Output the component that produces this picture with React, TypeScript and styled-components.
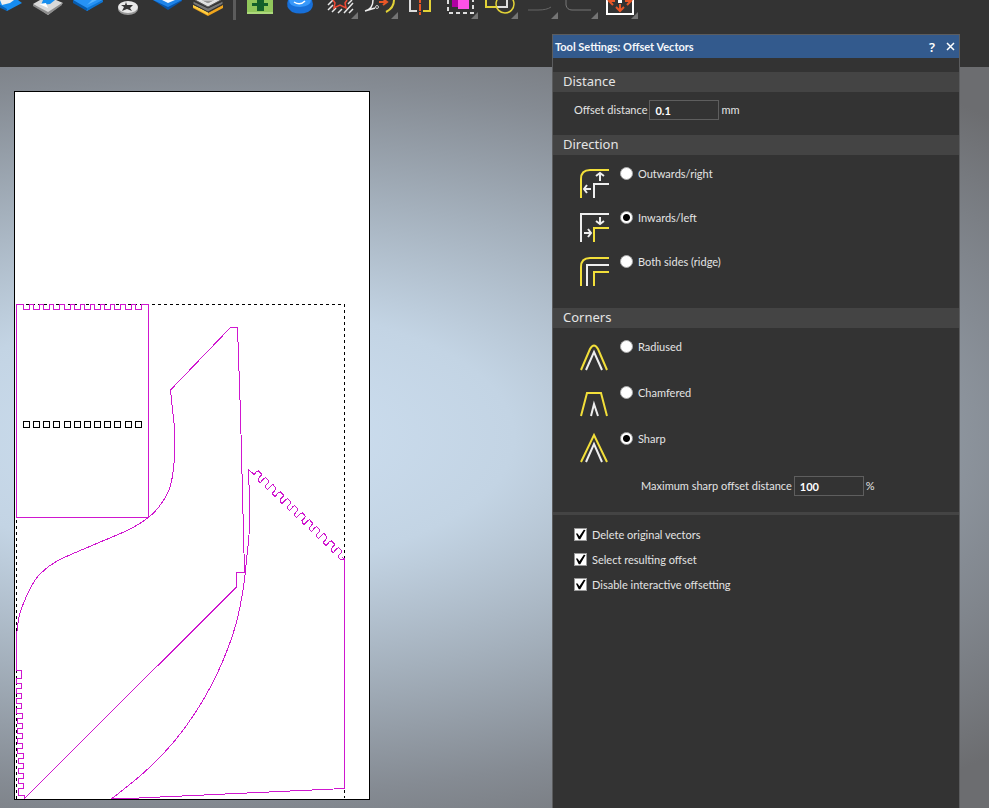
import React, { useState } from "react";
import styled, { createGlobalStyle } from "styled-components";

const Global = createGlobalStyle`
  *, *::before { box-sizing: border-box; }
  body {
    margin: 0;
    background: #333;
    color: #e4e4e4;
    font: 11px/16px Lato, "Noto Sans", sans-serif;
  }
`;

const Shell = styled.div`
  position: relative;
  display: flex;
  flex-direction: column;
  min-height: 100vh;
  overflow: hidden;
`;

const Toolbar = styled.header`
  display: flex;
  align-items: flex-start;
  height: 67px;
  margin-left: -12px;
  background: #333;
`;

const ToolButton = styled.button`
  flex: none;
  width: 40px;
  height: 24px;
  padding: 0;
  border: 0;
  background: none;
`;

const ToolSeparator = styled.div`
  flex: none;
  width: 3px;
  height: 20px;
  margin: 0 4px 0 5px;
  background: #5c5c5c;
`;

const ToolArt = styled.svg`
  display: block;
  width: 40px;
  height: 24px;
`;

const Workspace = styled.main`
  flex: 1;
  padding: 24px 14px 8px;
  background: radial-gradient(ellipse 1050px 470px at 220px 370px, #cfe1f3 0%, #c3d4e4 28%, #a4b0bc 52%, #858b93 76%, #6c6d70 100%);
`;

const Sheet = styled.svg`
  display: block;
  width: 356px;
  height: 709px;
  background: #fff;
  shape-rendering: crispEdges;
`;

const Panel = styled.section`
  position: absolute;
  top: 34px;
  right: 29px;
  bottom: 0;
  width: 408px;
  border: 1px solid #5b5c5e;
  border-bottom: 0;
  background: #333;
`;

const TitleBar = styled.div`
  display: flex;
  align-items: center;
  height: 23px;
  padding-left: 2px;
  background: #335a8d;
  color: #f4f6fa;
`;

const Title = styled.h1`
  flex: 1;
  margin: 0;
  font-size: 11px;
  font-weight: 700;
`;

const TitleButton = styled.button`
  display: grid;
  place-items: center;
  width: 18px;
  height: 20px;
  padding: 0;
  border: 0;
  background: none;
  color: #fff;
  font: 600 13px/16px "Noto Sans", sans-serif;
`;

const Group = styled.section<{ $gap?: number }>`
  padding-top: ${(p) => p.$gap ?? 15}px;
`;

const Heading = styled.h2`
  height: 20px;
  margin: 0;
  padding-left: 10px;
  background: #444;
  font: 400 13px/18px "Noto Sans", sans-serif;
`;

const Field = styled.label<{ $indent: number; $top?: number }>`
  display: flex;
  align-items: center;
  gap: 2px;
  height: 20px;
  margin-top: ${(p) => p.$top ?? 8}px;
  padding-left: ${(p) => p.$indent}px;
`;

const NumberBox = styled.input`
  width: 70px;
  height: 20px;
  padding: 0 5px;
  border: 1px solid #5e5e5e;
  background: #333;
  color: #fff;
  font: 700 11px/16px Lato, "Noto Sans", sans-serif;
  outline: 0;
`;

const Options = styled.div<{ $gap: number }>`
  display: grid;
  grid-auto-rows: 32px;
  row-gap: ${(p) => p.$gap}px;
  padding: 12px 0 0 26px;
`;

const Option = styled.label`
  display: flex;
  align-items: flex-start;
`;

const OptionArt = styled.svg`
  width: 32px;
  height: 32px;
  margin-right: 9px;
  fill: none;
  stroke-width: 2;
`;

const Radio = styled.input`
  appearance: none;
  width: 13px;
  height: 13px;
  margin: 0 5px 0 0;
  border: 1px solid #aaa;
  border-radius: 50%;
  background: #fff;
  &:checked {
    background: radial-gradient(circle, #000 0 3px, #fff 4px);
  }
`;

const OptionText = styled.span`
  line-height: 14px;
`;

const Divider = styled.hr`
  height: 3px;
  margin: 16px 0 0;
  border: 0;
  background: #444;
`;

const Checks = styled.div`
  display: grid;
  grid-auto-rows: 25px;
  align-items: center;
  padding: 7px 0 0 21px;
`;

const Check = styled.label`
  display: flex;
  align-items: center;
  gap: 5px;
`;

const CheckBox = styled.input`
  appearance: none;
  width: 13px;
  height: 13px;
  margin: 0;
  border: 1px solid #9a9a9a;
  background: #fff;
  &:checked::before {
    content: "";
    display: block;
    width: 11px;
    height: 11px;
    background: #000;
    clip-path: polygon(8% 42%, 24% 42%, 40% 66%, 80% 6%, 96% 8%, 48% 94%, 34% 94%);
  }
`;

type Point = [number, number];

// Smooth curve through a run of points.
const spline = (pts: Point[]) =>
  pts
    .slice(1)
    .map((p, i) => {
      const a = pts[Math.max(0, i - 1)];
      const b = pts[i];
      const d = pts[Math.min(pts.length - 1, i + 2)];
      return `C${b[0] + (p[0] - a[0]) / 6} ${b[1] + (p[1] - a[1]) / 6} ${p[0] - (d[0] - b[0]) / 6} ${p[1] - (d[1] - b[1]) / 6} ${p[0]} ${p[1]}`;
    })
    .join("");

const twelve = Array.from({ length: 12 }, (_, i) => i);
const slotX = (i: number) => Math.round(23 + i * 10.15) + 0.5;

const combTop = `M16.5 304.5${twelve.map((i) => `H${slotX(i)}v5h6v-5`).join("")}H148.5V517.5H16.5Z`;

const combLeft = twelve
  .map((i) => {
    const left = 16.5 + Math.floor(i / 4);
    const y = 683.5 + i * 10;
    return `H${left + 5}V${i === 0 ? 678.5 : y - 5}H${left}V${i === 11 ? 795.5 : y}`;
  })
  .join("");

const combSlope = twelve
  .map((i) => {
    const x = 254 + i * 7.3;
    const y = 474.5 + i * 7;
    return `L${x} ${y}l3 -3.4l1.6 -.2l2.6 2.8v1.6l-3 3.4v1.8l2 2`;
  })
  .join("");

const outline: Point[] = [
  [16.5, 636], [19, 617], [24, 602], [31, 587], [40, 574], [57, 561], [92, 545.5], [128, 530],
  [149, 517], [161, 504], [170, 487], [174, 463], [174.5, 430], [172, 405], [170.5, 390],
];

const arc: Point[] = [
  [249.5, 500], [249, 535], [247, 555], [243.5, 587], [236, 624], [222, 663], [205, 697], [184, 729],
  [163, 754], [140, 776], [112, 798.5],
];

function Drawing() {
  return (
    <Sheet viewBox="14 91 356 709" fill="none" role="img" aria-label="Vector drawing">
      <rect x="14.5" y="91.5" width="355" height="708" stroke="#000" />
      <path d="M16.5 799V304.5H344.5V798" stroke="#000" strokeDasharray="3 3" />
      {twelve.map((i) => (
        <rect key={i} x={slotX(i)} y="421.5" width="6" height="6" stroke="#000" />
      ))}
      <g stroke="#cf17cf">
        <path d={combTop} />
        <path d={`M16.5 636${spline(outline)}L230.5 327.5H237.5L240.5 414L244.5 572.5H236.5V587L24.5 798.5`} />
        <path d={`M16.5 636V670.5${combLeft}H24.5V799`} />
        <path d={`M249.5 500${spline(arc)}L128 798.5L344.5 788.5V559L342 557`} />
        <path d={`M249.5 500L248.5 469.5${combSlope}L344.5 560`} />
      </g>
    </Sheet>
  );
}

const Corner = () => <path d="M38 12V19H31Z" fill="#747474" />;

const tools: { name: string; art: React.ReactNode }[] = [
  {
    name: "Import relief",
    art: (
      <>
        <path d="M4 0L19 11L34 3L30 0Z" fill="#168cf0" />
        <path d="M4 0L19 9V11L0 2Z" fill="#0862b8" />
        <path d="M12 0L14 5L22 3L26 0Z" fill="#eee" />
      </>
    ),
  },
  {
    name: "Export relief",
    art: (
      <>
        <path d="M5 4L12 0H28L35 3L20 15Z" fill="#d9d9d9" />
        <path d="M5 4L20 12L34 3V5L20 15L5 6Z" fill="#8d8d8d" />
        <path d="M15 0L13 5L22 4L27 0Z" fill="#188eee" />
        <path d="M11 4L20 8L18 3Z" fill="#fff" />
      </>
    ),
  },
  {
    name: "Relief surface",
    art: (
      <>
        <path d="M5 0L19 11L35 0Z" fill="#2692f5" />
        <path d="M5 0L19 8V11L5 3Z" fill="#075caf" />
        <path d="M19 8L35 0V2L19 11Z" fill="#0c74d3" />
        <path d="M19 5L29 0H24Z" fill="#56b4ff" />
      </>
    ),
  },
  {
    name: "Relief clipart",
    art: (
      <>
        <ellipse cx="20" cy="9" rx="10" ry="6" fill="#999" />
        <ellipse cx="20" cy="7" rx="10" ry="6" fill="#e8e8e8" />
        <path d="M18 2L19 5H25L22 8L24 11L19 9L14 11L16 7L13 5H17Z" fill="#343434" />
      </>
    ),
  },
  {
    name: "Relief block",
    art: (
      <>
        <path d="M5 0L20 10L34 1V0Z" fill="#0754aa" />
        <path d="M5 0L20 7L34 0Z" fill="#1e83e8" />
        <path d="M14 0L20 3L27 0Z" fill="#f2f7ff" />
      </>
    ),
  },
  {
    name: "Relief layers",
    art: (
      <>
        <path d="M5 5L20 13L35 5V8L20 16L5 8Z" fill="#f0a51c" />
        <path d="M5 5L20 12V15L5 7Z" fill="#ffcf42" />
        <path d="M5 1L20 8L35 1V4L20 12L5 4Z" fill="#777" stroke="#333" />
        <path d="M7 0L20 7L33 0" fill="#ddd" stroke="#555" />
        <path d="M12 0L20 4L28 0Z" fill="#999" stroke="#eee" />
      </>
    ),
  },
];

const vectorTools: { name: string; art: React.ReactNode }[] = [
  {
    name: "Add",
    art: (
      <>
        <path d="M7 0H33V12Q33 14 31 14H9Q7 14 7 12Z" fill="#91c75b" />
        <path d="M7 12H33V14H7Z" fill="#acd97c" />
        <path d="M17 0H24V3H28V6H24V11H17V6H12V3H17Z" fill="#14602a" />
      </>
    ),
  },
  {
    name: "Smooth",
    art: (
      <>
        <path d="M8 0H32Q35 8 28 12Q20 15 12 12Q5 7 8 0Z" fill="#176fd8" />
        <path d="M9 0H31Q31 6 20 7Q9 7 9 0Z" fill="#3798fa" />
        <path d="M14 2Q20 6 25 1" fill="none" stroke="#fff" strokeWidth="1.5" />
      </>
    ),
  },
  {
    name: "Clip vectors",
    art: (
      <>
        <path d="M8 5L13 0M8 10L13 5M12 12L16 8M18 13L22 9M24 13L33 3M29 13L33 9M28 4L32 0" stroke="#e7e7e7" strokeWidth="1.5" />
        <path d="M13 0L15 3L14 8L20 5L26 8L25 3L27 0" fill="#333" stroke="#ed4a35" strokeWidth="1.5" />
        <Corner />
      </>
    ),
  },
  {
    name: "Fit curves",
    art: (
      <>
        <path d="M5 11Q13 9 13 0M5 11L15 8" fill="none" stroke="#eee" strokeWidth="1.5" />
        <circle cx="17" cy="7" r="1.500" fill="#333" stroke="#ccc" />
        <path d="M19 2H26M23 -1L27 2L23 5" fill="none" stroke="#e95727" strokeWidth="2" />
        <path d="M34 0Q34 8 26 12" fill="none" stroke="#e2d237" strokeWidth="2" />
        <Corner />
      </>
    ),
  },
  {
    name: "Mirror",
    art: (
      <>
        <path d="M10 0V11H17" fill="none" stroke="#ddd" strokeWidth="2" />
        <path d="M30 0V11H23" fill="none" stroke="#e2d237" strokeWidth="2" />
        <path d="M20 0V16" stroke="#e95727" strokeWidth="2" strokeDasharray="3 1 7 1" />
      </>
    ),
  },
  {
    name: "Group",
    art: (
      <>
        <path d="M8 0V13H33V0" fill="none" stroke="#ddd" strokeWidth="2" strokeDasharray="4 3" />
        <path d="M12 0H18V7H12Z" fill="#b000a2" />
        <path d="M18 0H29V9H18Z" fill="#ff51e7" />
        <Corner />
      </>
    ),
  },
  {
    name: "Weld",
    art: (
      <>
        <path d="M6 0V7H17" fill="none" stroke="#e2d237" strokeWidth="2" />
        <path d="M17 7H27V0" fill="none" stroke="#ddd" strokeWidth="2" />
        <circle cx="25" cy="4" r="9" fill="none" stroke="#e2d237" strokeWidth="1.5" />
        <Corner />
      </>
    ),
  },
  {
    name: "Join",
    art: (
      <>
        <path d="M8 10H18Q27 10 31 7" fill="none" stroke="#666" />
        <Corner />
      </>
    ),
  },
  {
    name: "Fillet",
    art: (
      <>
        <path d="M6 0V5Q7 10 12 10H31" fill="none" stroke="#777" />
        <Corner />
      </>
    ),
  },
  {
    name: "Transform",
    art: (
      <>
        <path d="M7 0V14H33V0" fill="none" stroke="#fff" strokeWidth="2" />
        <path d="M18 0H22V3H18Z" fill="#fff" />
        <path d="M20 4V10M16 7L20 11L24 7M9 1H15M12 0L9 1L13 5M31 1H25M28 0L31 1L27 5" fill="none" stroke="#e95727" strokeWidth="2" />
        <Corner />
      </>
    ),
  },
];

const yellow = "#f2df3a";
const white = "#eee";

const directions = [
  {
    label: "Outwards/right",
    art: (
      <>
        <path d="M2 31V12Q2 3 11 3H30" stroke={yellow} />
        <path d="M15 31V17H30M12 22H5M8 18L5 22L8 26M21 14V6M17 9L21 6L25 9" stroke={white} />
      </>
    ),
  },
  {
    label: "Inwards/left",
    art: (
      <>
        <path d="M2 31V3H30M5 22H12M9 18L12 22L9 26M21 6V13M17 10L21 13L25 10" stroke={white} />
        <path d="M15 31V17H30" stroke={yellow} />
      </>
    ),
  },
  {
    label: "Both sides (ridge)",
    art: (
      <>
        <path d="M2 31V12Q2 3 11 3H30M15 31V17H30" stroke={yellow} />
        <path d="M8 31V10H30" stroke={white} />
      </>
    ),
  },
];

const corners = [
  {
    label: "Radiused",
    art: (
      <>
        <path d="M2 30L11 9Q15 2 19 9L28 30" stroke={yellow} />
        <path d="M7 30L15 12L23 30" stroke={white} />
      </>
    ),
  },
  {
    label: "Chamfered",
    art: (
      <>
        <path d="M2 30L8 7H22L28 30" stroke={yellow} />
        <path d="M12 30L15 18L19 30" stroke={white} />
      </>
    ),
  },
  {
    label: "Sharp",
    art: (
      <>
        <path d="M2 30L15 3L28 30" stroke={yellow} />
        <path d="M7 30L15 12L23 30" stroke={white} />
      </>
    ),
  },
];

type RadioListProps = {
  name: string;
  gap: number;
  items: { label: string; art: React.ReactNode }[];
  initial: string;
};

function RadioList({ name, gap, items, initial }: RadioListProps) {
  const [value, setValue] = useState(initial);
  return (
    <Options $gap={gap} role="radiogroup" aria-label={name}>
      {items.map(({ label, art }) => (
        <Option key={label}>
          <OptionArt viewBox="0 0 32 32" aria-hidden="true">{art}</OptionArt>
          <Radio type="radio" name={name} checked={value === label} onChange={() => setValue(label)} />
          <OptionText>{label}</OptionText>
        </Option>
      ))}
    </Options>
  );
}

const renderTool = ({ name, art }: { name: string; art: React.ReactNode }) => (
  <ToolButton key={name} type="button" aria-label={name}>
    <ToolArt viewBox="0 0 40 24" aria-hidden="true">{art}</ToolArt>
  </ToolButton>
);

export default function App() {
  return (
    <Shell>
      <Global />
      <Toolbar>
        {tools.map(renderTool)}
        <ToolSeparator />
        {vectorTools.map(renderTool)}
      </Toolbar>
      <Workspace>
        <Drawing />
      </Workspace>
      <Panel>
        <TitleBar>
          <Title>Tool Settings: Offset Vectors</Title>
          <TitleButton type="button" aria-label="Help">?</TitleButton>
          <TitleButton type="button" aria-label="Close">
            <svg width="9" height="9" viewBox="0 0 9 9" aria-hidden="true">
              <path d="M1 1L8 8M8 1L1 8" stroke="#fff" strokeWidth="1.5" />
            </svg>
          </TitleButton>
        </TitleBar>
        <Group $gap={14}>
          <Heading>Distance</Heading>
          <Field $indent={21}>
            Offset distance
            <NumberBox defaultValue="0.1" />
            mm
          </Field>
        </Group>
        <Group>
          <Heading>Direction</Heading>
          <RadioList name="Direction" gap={12} items={directions} initial="Inwards/left" />
        </Group>
        <Group $gap={21}>
          <Heading>Corners</Heading>
          <RadioList name="Corners" gap={14} items={corners} initial="Sharp" />
          <Field $indent={88} $top={12}>
            Maximum sharp offset distance
            <NumberBox defaultValue="100" />
            %
          </Field>
        </Group>
        <Divider />
        <Checks>
          {["Delete original vectors", "Select resulting offset", "Disable interactive offsetting"].map((label) => (
            <Check key={label}>
              <CheckBox type="checkbox" defaultChecked />
              {label}
            </Check>
          ))}
        </Checks>
      </Panel>
    </Shell>
  );
}
